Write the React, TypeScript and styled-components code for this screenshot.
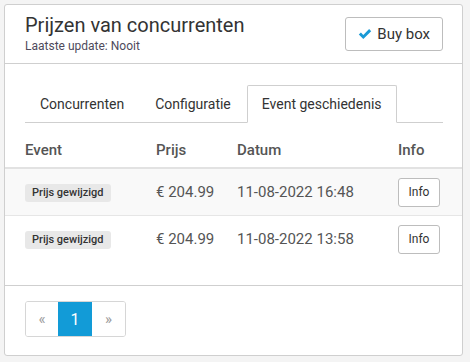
import styled, { createGlobalStyle } from "styled-components";

interface EventRow {
  id: string;
  label: string;
  price: string;
  date: string;
}

const EVENTS: EventRow[] = [
  { id: "e1", label: "Prijs gewijzigd", price: "€ 204.99", date: "11-08-2022 16:48" },
  { id: "e2", label: "Prijs gewijzigd", price: "€ 204.99", date: "11-08-2022 13:58" },
];

const TABS = ["Concurrenten", "Configuratie", "Event geschiedenis"];

const GlobalStyle = createGlobalStyle`
  * { box-sizing: border-box; }
  body {
    margin: 0;
    background: #f4f4f4;
    font-family: Roboto, "Liberation Sans", Arial, sans-serif;
    color: #333;
  }
`;

const Card = styled.div`
  width: 459px;
  height: 352px;
  margin: 4px 0 0 4px;
  background: #fff;
  border: 1px solid #cfcfcf;
  border-radius: 3px;
  display: flex;
  flex-direction: column;
`;

const Header = styled.div`
  display: flex;
  align-items: center;
  justify-content: space-between;
  height: 59px;
  padding: 0 19px 0 20px;
  border-bottom: 1px solid #cfcfcf;
`;

const TitleBlock = styled.div`
  display: flex;
  flex-direction: column;
  gap: 2px;
  margin-top: -1px;
`;

const Title = styled.h3`
  margin: 0;
  font-size: 20px;
  line-height: 24px;
  font-weight: 400;
  color: #333;
`;

const Subtitle = styled.span`
  font-size: 12px;
  line-height: 15px;
  color: #4e4a5c;
`;

const ButtonOutline = styled.button`
  display: flex;
  align-items: center;
  gap: 5px;
  height: 34px;
  padding: 0 12px;
  background: #fff;
  border: 1px solid #bdbdbd;
  border-radius: 3px;
  font-family: inherit;
  font-size: 15px;
  color: #333;
`;

const Body = styled.div`
  flex: 1;
`;

const TabBar = styled.div`
  display: flex;
  margin: 21px 19px 0 20px;
  border-bottom: 1px solid #cfcfcf;
`;

const Tab = styled.div<{ $active?: boolean }>`
  height: 38px;
  margin-bottom: -1px;
  margin-right: 1px;
  padding: 0 14px;
  display: flex;
  align-items: center;
  font-size: 14px;
  color: #333;
  border: 1px solid ${({ $active }) => ($active ? "#cfcfcf" : "transparent")};
  border-bottom-color: ${({ $active }) => ($active ? "#fff" : "transparent")};
  border-radius: 2px 2px 0 0;
  background: ${({ $active }) => ($active ? "#fff" : "transparent")};
`;

const Table = styled.div`
  margin-top: 10px;
`;

const Row = styled.div<{ $head?: boolean; $striped?: boolean }>`
  display: grid;
  grid-template-columns: 131px 81px 161px 1fr;
  align-items: center;
  padding: 0 19px 0 20px;
  height: ${({ $head }) => ($head ? "36px" : "47px")};
  background: ${({ $striped }) => ($striped ? "#f9f9f9" : "#fff")};
  border-bottom: ${({ $head }) => ($head ? "2px solid #e2e2e2" : "1px solid #e6e6e6")};

  &:last-child {
    border-bottom: none;
    height: 46px;
  }
`;

const HeadCell = styled.div`
  font-size: 15px;
  font-weight: 500;
  color: #555;
`;

const Cell = styled.div`
  font-size: 15px;
  color: #555;
`;

const Badge = styled.span`
  display: inline-block;
  padding: 2px 7px;
  font-size: 11px;
  line-height: 14px;
  font-weight: 500;
  color: #333;
  background: #e8e8e8;
  border-radius: 3px;
`;

const SmallButton = styled.button`
  width: 42px;
  height: 29px;
  padding: 0;
  background: #fff;
  border: 1px solid #bdbdbd;
  border-radius: 3px;
  font-family: inherit;
  font-size: 12px;
  color: #333;
`;

const Footer = styled.div`
  border-top: 1px solid #cfcfcf;
  padding: 15px 20px 18px;
`;

const Pagination = styled.div`
  display: inline-flex;
  border: 1px solid #d6d6d6;
  border-radius: 3px;
  overflow: hidden;
`;

const PageItem = styled.div<{ $active?: boolean; $w: number }>`
  width: ${({ $w }) => $w}px;
  height: 34px;
  display: flex;
  align-items: center;
  justify-content: center;
  font-size: ${({ $active }) => ($active ? "16px" : "15px")};
  color: ${({ $active }) => ($active ? "#fff" : "#9a9a9a")};
  background: ${({ $active }) => ($active ? "#129bd7" : "#fff")};
`;

function CheckIcon() {
  return (
    <svg width="14" height="12" viewBox="0 0 14 12">
      <path d="M0.8 6.6 L2.9 4.5 L5.3 6.9 L11.1 1.1 L13.2 3.2 L5.3 11.1 Z" fill="#1a9ad6" />
    </svg>
  );
}

export default function App() {
  return (
    <>
      <GlobalStyle />
      <Card>
        <Header>
          <TitleBlock>
            <Title>Prijzen van concurrenten</Title>
            <Subtitle>Laatste update: Nooit</Subtitle>
          </TitleBlock>
          <ButtonOutline>
            <CheckIcon />
            Buy box
          </ButtonOutline>
        </Header>
        <Body>
          <TabBar>
            {TABS.map((t) => (
              <Tab key={t} $active={t === "Event geschiedenis"}>
                {t}
              </Tab>
            ))}
          </TabBar>
          <Table>
            <Row $head>
              <HeadCell>Event</HeadCell>
              <HeadCell>Prijs</HeadCell>
              <HeadCell>Datum</HeadCell>
              <HeadCell>Info</HeadCell>
            </Row>
            {EVENTS.map((ev, i) => (
              <Row key={ev.id} $striped={i % 2 === 0}>
                <Cell>
                  <Badge>{ev.label}</Badge>
                </Cell>
                <Cell>{ev.price}</Cell>
                <Cell>{ev.date}</Cell>
                <Cell>
                  <SmallButton>Info</SmallButton>
                </Cell>
              </Row>
            ))}
          </Table>
        </Body>
        <Footer>
          <Pagination>
            <PageItem $w={32}>«</PageItem>
            <PageItem $w={34} $active>
              1
            </PageItem>
            <PageItem $w={33}>»</PageItem>
          </Pagination>
        </Footer>
      </Card>
    </>
  );
}
